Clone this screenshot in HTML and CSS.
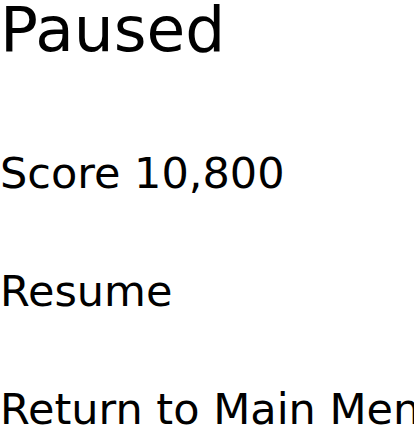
FILE: index.html
```html
<!DOCTYPE html>
<html lang="en">
<head>
    <meta charset="UTF-8">
    <title>Paused</title>
    <link rel="stylesheet" href="styles.css">
</head>
<body>
    <div class="pause-menu">
        <h1 class="pause-title">Paused</h1>
        <p class="pause-score">Score 10,800</p>
        <div class="pause-item">Resume</div>
        <div class="pause-item">Return to Main Menu</div>
    </div>
</body>
</html>
```

FILE: styles.css
```css
* {
    margin: 0;
    padding: 0;
    box-sizing: border-box;
}

body {
    font-family: "DejaVu Sans", sans-serif;
    color: #000;
    background: #fff;
    overflow: hidden;
}

.pause-menu {
    display: flex;
    flex-direction: column;
    white-space: nowrap;
}

.pause-title {
    font-size: 63px;
    font-weight: normal;
    line-height: 60px;
}

.pause-score,
.pause-item {
    font-size: 43px;
    line-height: 50px;
    margin-top: 68px;
}

.pause-score {
    margin-top: 88px;
}
```
